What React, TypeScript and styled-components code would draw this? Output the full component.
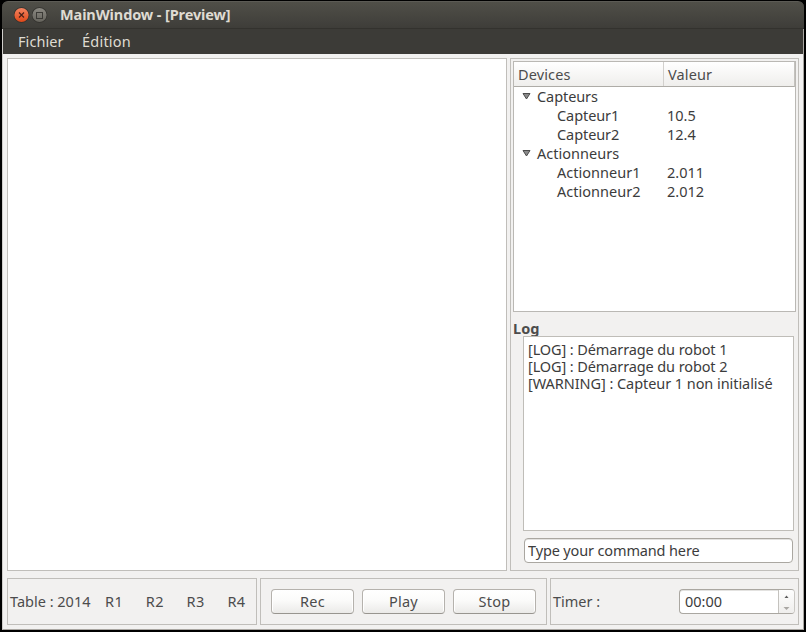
import React from "react";
import styled, { createGlobalStyle } from "styled-components";

const GlobalStyle = createGlobalStyle`
  *, *::before, *::after { box-sizing: border-box; }
  body {
    margin: 0;
    background: #000;
    color: #4c4c4c;
    font-family: "Noto Sans", "Open Sans", sans-serif;
    font-size: 14.5px;
    overflow: hidden;
  }
`;

const Desktop = styled.div`
  width: 806px;
  height: 632px;
  padding: 1px 2px 2px;
  background: #000;
`;

const Window = styled.div`
  display: flex;
  flex-direction: column;
  height: 629px;
`;

const TitleBar = styled.header`
  display: flex;
  align-items: center;
  gap: 2px;
  height: 28px;
  padding-left: 12px;
  border-top: 1px solid #5c5b55;
  border-bottom: 1px solid #33322e;
  border-radius: 6px 6px 0 0;
  background: linear-gradient(#504f48, #3e3d39);
`;

const Title = styled.h1`
  margin: 0 0 2px 10px;
  font-size: 14.5px;
  line-height: 24px;
  font-weight: 700;
  letter-spacing: -0.11px;
  color: #dfdbd2;
  white-space: pre;
`;

const WindowButton = styled.svg`
  display: block;
  width: 16px;
  height: 16px;
`;

const Body = styled.div`
  display: flex;
  flex-direction: column;
  flex: 1;
  border: 1px solid #a9a6a1;
  border-left-color: #d0cecb;
  border-top: 0;
  background: #f2f1f0;
`;

const MenuBar = styled.nav`
  display: flex;
  gap: 18.5px;
  height: 25px;
  padding-left: 15px;
  background: #3c3b37;
  color: #dfdbd2;
`;

const MenuItem = styled.span<{ $spacing: number }>`
  line-height: 25px;
  letter-spacing: ${(p) => p.$spacing}px;
`;

const Content = styled.main`
  display: flex;
  flex-direction: column;
  gap: 7px;
  padding: 4px;
`;

const Row = styled.div<{ $height: number }>`
  display: flex;
  gap: 3px;
  height: ${(p) => p.$height}px;
`;

const Frame = styled.section<{ $width: number }>`
  width: ${(p) => p.$width}px;
  flex: none;
  border: 1px solid #c0beba;
`;

const Canvas = styled(Frame)`
  background: #fff;
`;

const SidePanel = styled(Frame)`
  display: flex;
  flex-direction: column;
  padding: 2px;
`;

const Strip = styled(Frame)`
  display: flex;
  align-items: center;
`;

const Tree = styled.div`
  height: 251px;
  border: 1px solid #bab8b4;
  background: #fff;
`;

const TreeHeader = styled.div`
  display: flex;
  height: 25px;
  line-height: 25px;
  border-bottom: 1px solid #aeaca7;
  border-right: 1px solid #c4c2be;
  background: linear-gradient(#ffffff, #efeeec);
  letter-spacing: 0.12px;
`;

const HeaderCell = styled.span<{ $first?: boolean }>`
  width: ${(p) => (p.$first ? 150 : 130)}px;
  padding-left: 4px;
  border-right: ${(p) => (p.$first ? "1px solid #d2d0cd" : "0")};
`;

const TreeRow = styled.div<{ $child?: boolean }>`
  display: flex;
  align-items: center;
  height: 19px;
  line-height: 19px;
  padding-left: ${(p) => (p.$child ? 43 : 8)}px;
  color: #3c3c3c;
`;

const Expander = styled.svg`
  width: 9px;
  height: 7px;
  margin: 0 6px 0 0;
`;

const NameCell = styled.span<{ $spacing: number }>`
  width: 110px;
  letter-spacing: ${(p) => p.$spacing}px;
`;

const LogTitle = styled.h2`
  height: 15px;
  margin: 9px 0 0;
  font-size: 14.5px;
  line-height: 15px;
  font-weight: 700;
  letter-spacing: 0.1px;
`;

/* Stacks above the heading so that its descender ends at the border. */
const LogView = styled.div`
  position: relative;
  width: 271px;
  height: 195px;
  margin-left: 10px;
  padding: 4px 0 0 4px;
  border: 1px solid #bfbdb8;
  background: #fff;
  color: #3c3c3c;
`;

const LogLine = styled.div<{ $spacing: number }>`
  line-height: 17px;
  white-space: pre;
  letter-spacing: ${(p) => p.$spacing}px;
`;

const CommandInput = styled.input`
  width: 269px;
  height: 25px;
  margin: 7px 0 0 11px;
  padding: 0 0 2px 3px;
  border: 1px solid #aaa7a1;
  border-radius: 4px;
  box-shadow: inset 0 1px 0 #e3e2e0;
  background: #fff;
  color: #3c3c3c;
  font: inherit;
  letter-spacing: -0.14px;
  outline: 0;
`;

const StripLabel = styled.span`
  line-height: 24px;
  margin-bottom: 1px;
  white-space: nowrap;
`;

const TableLabel = styled(StripLabel)`
  flex: none;
  width: 95px;
  padding-left: 2px;
`;

const RobotLabel = styled(StripLabel)`
  flex: none;
  width: 40.8px;
  padding-left: 2px;
  letter-spacing: 0.4px;
`;

const PushButton = styled.button`
  width: 83px;
  height: 25px;
  padding: 0;
  border: 1px solid #b5b2ad;
  border-bottom-color: #98958f;
  border-radius: 4px;
  background: linear-gradient(#ffffff, #fbfbfa 45%, #ebeae8);
  box-shadow: inset 1px 0 0 #fff, inset -1px 0 0 #fff;
  color: #4c4c4c;
  font: inherit;
  line-height: 23px;
  letter-spacing: 0.25px;
`;

const ButtonStrip = styled(Strip)`
  gap: 8px;
  padding-left: 10px;
`;

const TimerStrip = styled(Strip)`
  justify-content: space-between;
  padding: 0 3px 0 2px;
`;

const SpinBox = styled.div`
  display: flex;
  width: 116px;
  height: 25px;
  border: 1px solid #aaa7a1;
  border-right-color: #c9c7c3;
  border-radius: 4px;
  background: #fff;
  box-shadow: inset 0 1px 0 #e3e2e0;
  overflow: hidden;
`;

const SpinValue = styled.span`
  flex: 1;
  padding-left: 5px;
  line-height: 23px;
  color: #3c3c3c;
`;

const SpinArrows = styled.svg`
  width: 16px;
  height: 23px;
  border-left: 1px solid #c4c2be;
  background: linear-gradient(#fefefe, #efeeec);
`;

const CloseIcon = () => (
  <WindowButton viewBox="0 0 16 16">
    <defs>
      <linearGradient id="close" x1="0" y1="0" x2="0" y2="1">
        <stop offset="0" stopColor="#f58562" />
        <stop offset="1" stopColor="#df4818" />
      </linearGradient>
    </defs>
    <circle cx="7.5" cy="8" r="7.8" fill="#32312d" />
    <circle cx="7.5" cy="8" r="7.1" fill="url(#close)" />
    <path d="M5 5.5l5 5M10 5.5l-5 5" stroke="#4a2118" strokeWidth="1.2" />
  </WindowButton>
);

const MaximizeIcon = () => (
  <WindowButton viewBox="0 0 16 16">
    <defs>
      <linearGradient id="maximize" x1="0" y1="0" x2="0" y2="1">
        <stop offset="0" stopColor="#8b8982" />
        <stop offset="1" stopColor="#65635c" />
      </linearGradient>
    </defs>
    <circle cx="7.5" cy="8" r="7.8" fill="#32312d" />
    <circle cx="7.5" cy="8" r="7.1" fill="url(#maximize)" />
    <rect x="4.5" y="5.5" width="6" height="6" fill="none" stroke="#3b3a36" />
  </WindowButton>
);

const devices = [
  {
    group: "Capteurs",
    spacing: -0.08,
    items: [
      ["Capteur1", "10.5"],
      ["Capteur2", "12.4"],
    ],
  },
  {
    group: "Actionneurs",
    spacing: 0.03,
    items: [
      ["Actionneur1", "2.011"],
      ["Actionneur2", "2.012"],
    ],
  },
];

export default function App() {
  return (
    <Desktop>
      <GlobalStyle />
      <Window>
        <TitleBar>
          <CloseIcon />
          <MaximizeIcon />
          <Title>MainWindow - [Preview]</Title>
        </TitleBar>
        <Body>
          <MenuBar>
            <MenuItem $spacing={0.07}>Fichier</MenuItem>
            <MenuItem $spacing={0.2}>Édition</MenuItem>
          </MenuBar>
          <Content>
            <Row $height={513}>
              <Canvas $width={500} />
              <SidePanel $width={289}>
                <Tree>
                  <TreeHeader>
                    <HeaderCell $first>Devices</HeaderCell>
                    <HeaderCell>Valeur</HeaderCell>
                  </TreeHeader>
                  {devices.map(({ group, spacing, items }) => (
                    <React.Fragment key={group}>
                      <TreeRow>
                        <Expander viewBox="0 0 9 7">
                          <path d="M1 0.5h7L4.5 6z" fill="#8a8a8a" stroke="#4c4c4c" />
                        </Expander>
                        <NameCell $spacing={spacing}>{group}</NameCell>
                      </TreeRow>
                      {items.map(([name, value]) => (
                        <TreeRow key={name} $child>
                          <NameCell $spacing={spacing}>{name}</NameCell>
                          <span>{value}</span>
                        </TreeRow>
                      ))}
                    </React.Fragment>
                  ))}
                </Tree>
                <LogTitle>Log</LogTitle>
                <LogView>
                  <LogLine $spacing={-0.11}>[LOG] : Démarrage du robot 1</LogLine>
                  <LogLine $spacing={-0.11}>[LOG] : Démarrage du robot 2</LogLine>
                  <LogLine $spacing={-0.06}>[WARNING] : Capteur 1 non initialisé</LogLine>
                </LogView>
                <CommandInput defaultValue="Type your command here" />
              </SidePanel>
            </Row>
            <Row $height={47}>
              <Strip $width={250}>
                <TableLabel>Table : 2014</TableLabel>
                {["R1", "R2", "R3", "R4"].map((robot) => (
                  <RobotLabel key={robot}>{robot}</RobotLabel>
                ))}
              </Strip>
              <ButtonStrip $width={287}>
                {["Rec", "Play", "Stop"].map((label) => (
                  <PushButton key={label}>{label}</PushButton>
                ))}
              </ButtonStrip>
              <TimerStrip $width={249}>
                <StripLabel>Timer :</StripLabel>
                <SpinBox>
                  <SpinValue>00:00</SpinValue>
                  <SpinArrows viewBox="0 0 15 23">
                    <path d="M5.5 8L7.5 5.5L9.5 8z" fill="#5c5c5c" />
                    <path d="M4.5 17L7.5 20L10.5 17z" fill="#a9a7a3" />
                  </SpinArrows>
                </SpinBox>
              </TimerStrip>
            </Row>
          </Content>
        </Body>
      </Window>
    </Desktop>
  );
}
